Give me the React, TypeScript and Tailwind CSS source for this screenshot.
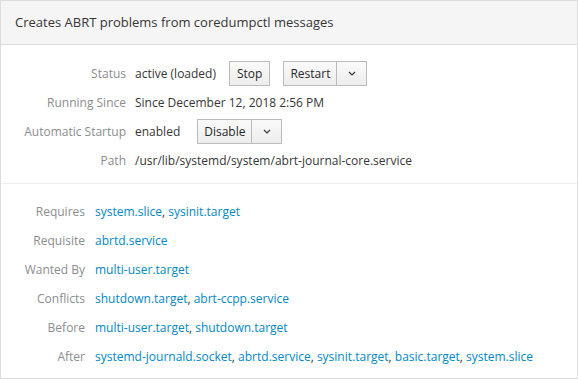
const Chevron = () => (
  <svg width="8" height="5" viewBox="0 0 8 5" fill="none">
    <path d="M1 1l3 3 3-3" stroke="#363636" strokeWidth="1.2" />
  </svg>
);

const btn =
  "h-[25px] px-[6px] flex items-center border border-[#bbb] bg-gradient-to-b from-[#fafafa] to-[#ededed] text-[#292929] font-medium text-[12px]";

type Row = { label: string; links: string[] };

const deps: Row[] = [
  { label: "Requires", links: ["system.slice", "sysinit.target"] },
  { label: "Requisite", links: ["abrtd.service"] },
  { label: "Wanted By", links: ["multi-user.target"] },
  { label: "Conflicts", links: ["shutdown.target", "abrt-ccpp.service"] },
  { label: "Before", links: ["multi-user.target", "shutdown.target"] },
  {
    label: "After",
    links: [
      "systemd-journald.socket",
      "abrtd.service",
      "sysinit.target",
      "basic.target",
      "system.slice",
    ],
  },
];

const Label = ({ children }: { children: React.ReactNode }) => (
  <div className="h-[29px] flex items-center justify-end text-[#8b8d8f]">{children}</div>
);

export default function App() {
  return (
    <div
      className="w-[578px] h-[380px] bg-white text-[12px] text-[#363636]"
      style={{ fontFamily: '"Open Sans", sans-serif' }}
    >
      <div className="h-[379px] border border-[#ddd] flex flex-col">
        <div className="h-[44px] bg-[#f5f5f5] border-b border-[#ddd] flex items-center px-[14px] text-[13px] text-[#363636]">
          Creates ABRT problems from coredumpctl messages
        </div>

        <div className="grid grid-cols-[125px_1fr] gap-x-[9px] pt-[14px] pb-[8px] border-b border-[#eee]">
          <Label>Status</Label>
          <div className="h-[29px] flex items-center">
            <span>active (loaded)</span>
            <button className={`${btn} px-[7px] ml-[13px]`}>Stop</button>
            <div className="flex ml-[13px]">
              <button className={btn}>Restart</button>
              <button className={`${btn} border-l-0 w-[30px] justify-center`}>
                <Chevron />
              </button>
            </div>
          </div>

          <Label>Running Since</Label>
          <div className="h-[29px] flex items-center">Since December 12, 2018 2:56 PM</div>

          <Label>Automatic Startup</Label>
          <div className="h-[29px] flex items-center">
            <span>enabled</span>
            <div className="flex ml-[17px]">
              <button className={btn}>Disable</button>
              <button className={`${btn} border-l-0 w-[30px] justify-center`}>
                <Chevron />
              </button>
            </div>
          </div>

          <Label>Path</Label>
          <div className="h-[29px] flex items-center">/usr/lib/systemd/system/abrt-journal-core.service</div>
        </div>

        <div className="grid grid-cols-[84px_1fr] gap-x-[10px] pt-[13px]">
          {deps.map((row) => (
            <>
              <Label key={row.label}>{row.label}</Label>
              <div key={row.label + "-v"} className="h-[29px] flex items-center whitespace-pre">
                {row.links.map((l, i) => (
                  <span key={l}>
                    <a className="text-[#0088ce] cursor-pointer">{l}</a>
                    {i < row.links.length - 1 && ", "}
                  </span>
                ))}
              </div>
            </>
          ))}
        </div>
      </div>
    </div>
  );
}
